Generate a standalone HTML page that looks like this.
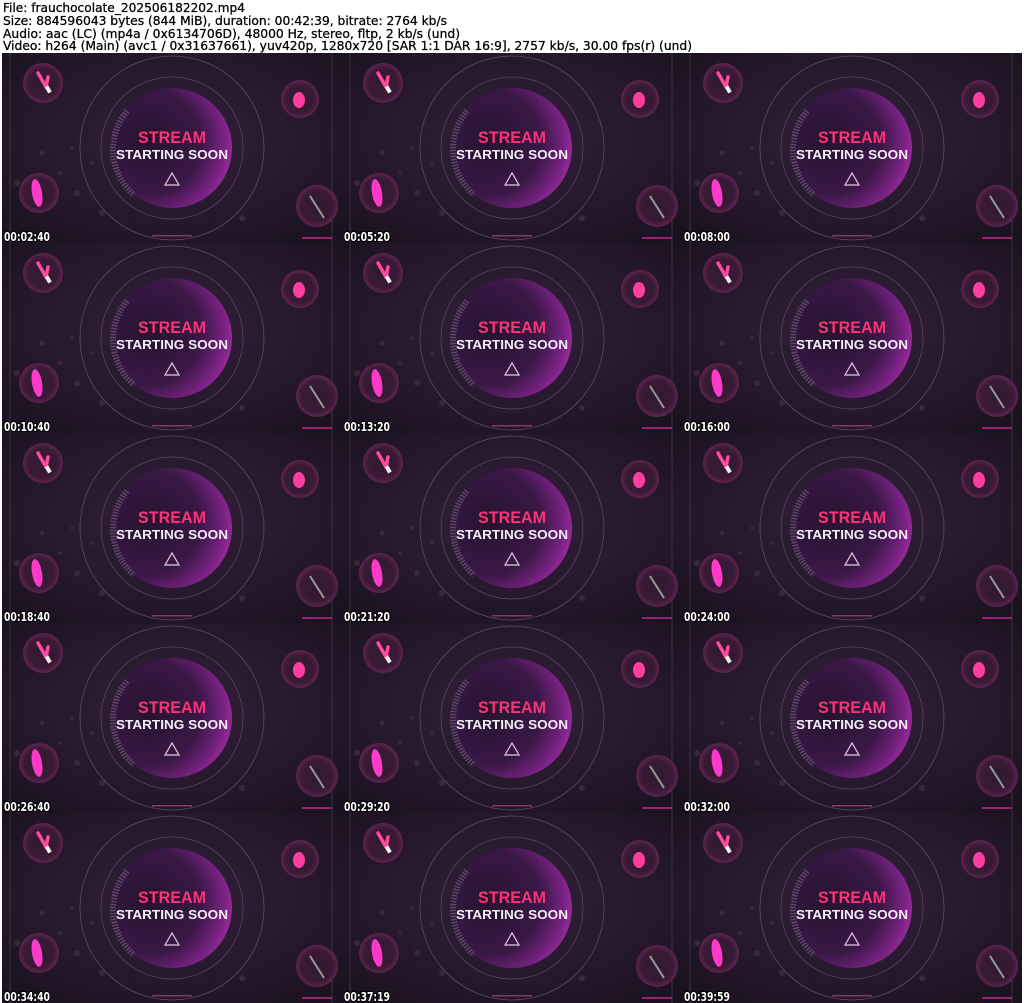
<!DOCTYPE html>
<html><head><meta charset="utf-8"><style>
html,body{margin:0;padding:0;background:#fff;width:1024px;height:1003px;overflow:hidden}
svg{display:block}
.h{font-family:"DejaVu Sans Condensed","DejaVu Sans","Liberation Sans",sans-serif;font-size:12.5px;fill:#000;stroke:#000;stroke-width:0.25}
.s1{font-family:"Liberation Sans","DejaVu Sans",sans-serif;font-weight:bold;font-size:17px;fill:#ff3278}
.s2{font-family:"Liberation Sans","DejaVu Sans",sans-serif;font-weight:bold;font-size:13px;fill:#f4eef6}
.ts{font-family:"DejaVu Sans","Liberation Sans",sans-serif;font-weight:bold;font-size:12px;fill:#fff;stroke:#000;stroke-width:2;paint-order:stroke}
</style></head><body>
<svg width="1024" height="1003" viewBox="0 0 1024 1003" xmlns="http://www.w3.org/2000/svg">
<defs>
<radialGradient id="bg" cx="0.5" cy="0.45" r="0.7"><stop offset="0" stop-color="#33203b"/><stop offset="0.6" stop-color="#26182c"/><stop offset="1" stop-color="#1a1220"/></radialGradient>
<radialGradient id="sp" cx="0.3" cy="0.45" r="0.8"><stop offset="0" stop-color="#26142e"/><stop offset="0.55" stop-color="#3a1846"/><stop offset="0.8" stop-color="#7a2284"/><stop offset="1" stop-color="#c235b8"/></radialGradient>
<radialGradient id="cc" cx="0.5" cy="0.5" r="0.5"><stop offset="0" stop-color="#2e1a30"/><stop offset="0.75" stop-color="#3a1a36"/><stop offset="1" stop-color="#5e2450"/></radialGradient>
<g id="t">
<rect width="340" height="190" fill="url(#bg)"/>
<line x1="8" y1="0" x2="8" y2="190" stroke="#40303f" stroke-width="1"/>
<line x1="330" y1="0" x2="330" y2="190" stroke="#40303f" stroke-width="1"/>
<circle cx="170" cy="95" r="92" fill="none" stroke="#5e4a66" stroke-width="0.8"/>
<circle cx="170" cy="95" r="71" fill="none" stroke="#5e4a66" stroke-width="0.7"/>
<circle cx="170" cy="95" r="60" fill="url(#sp)"/>
<path d="M125 58 A60 60 0 0 0 132 142" fill="none" stroke="#8a7890" stroke-width="6" stroke-dasharray="1.5 1.5" opacity="0.5"/>
<path d="M163 132 L170 120 L177 132 Z" fill="none" stroke="#e8c8e0" stroke-width="1.2"/>
<g fill="#3a2838"><circle cx="40" cy="100" r="2.5"/><circle cx="58" cy="120" r="2"/><circle cx="70" cy="95" r="2"/><circle cx="75" cy="140" r="3"/><circle cx="90" cy="110" r="2"/><circle cx="100" cy="160" r="3"/><circle cx="240" cy="165" r="3"/><circle cx="15" cy="130" r="3"/></g>
<circle cx="41" cy="30" r="20" fill="url(#cc)"/>
<circle cx="298" cy="46" r="19" fill="url(#cc)"/>
<circle cx="37" cy="140" r="20" fill="url(#cc)"/>
<circle cx="315" cy="153" r="21" fill="url(#cc)"/>
<path d="M36 20 L44 34 M44 34 L46 24" stroke="#ff4aa0" stroke-width="3.5" stroke-linecap="round" fill="none"/>
<rect x="44" y="33" width="4" height="7" fill="#eee" transform="rotate(-30 46 36)"/>
<ellipse cx="297" cy="47" rx="6" ry="8" fill="#ff3ea0"/>
<ellipse cx="35" cy="140" rx="5" ry="14" fill="#ff3ac8" transform="rotate(-10 35 140)"/>
<line x1="308" y1="143" x2="322" y2="165" stroke="#999" stroke-width="2"/>
<rect x="150" y="182" width="40" height="1.5" fill="#d0508a" opacity="0.6"/>
<rect x="300" y="184" width="30" height="2" fill="#d02a9a" opacity="0.7"/>
</g>
</defs>
<text class="h" x="3" y="12" textLength="242" lengthAdjust="spacingAndGlyphs">File: frauchocolate_202506182202.mp4</text>
<text class="h" x="3" y="25" textLength="444" lengthAdjust="spacingAndGlyphs">Size: 884596043 bytes (844 MiB), duration: 00:42:39, bitrate: 2764 kb/s</text>
<text class="h" x="3" y="38" textLength="457" lengthAdjust="spacingAndGlyphs">Audio: aac (LC) (mp4a / 0x6134706D), 48000 Hz, stereo, fltp, 2 kb/s (und)</text>
<text class="h" x="3" y="50" textLength="689" lengthAdjust="spacingAndGlyphs">Video: h264 (Main) (avc1 / 0x31637661), yuv420p, 1280x720 [SAR 1:1 DAR 16:9], 2757 kb/s, 30.00 fps(r) (und)</text>

<g transform="translate(2,53)"><use href="#t"/><text class="s1" x="136" y="90" textLength="68" lengthAdjust="spacingAndGlyphs">STREAM</text><text class="s2" x="114" y="106" textLength="112" lengthAdjust="spacingAndGlyphs">STARTING SOON</text><text class="ts" x="2" y="188" textLength="46" lengthAdjust="spacingAndGlyphs">00:02:40</text></g>
<g transform="translate(342,53)"><use href="#t"/><text class="s1" x="136" y="90" textLength="68" lengthAdjust="spacingAndGlyphs">STREAM</text><text class="s2" x="114" y="106" textLength="112" lengthAdjust="spacingAndGlyphs">STARTING SOON</text><text class="ts" x="2" y="188" textLength="46" lengthAdjust="spacingAndGlyphs">00:05:20</text></g>
<g transform="translate(682,53)"><use href="#t"/><text class="s1" x="136" y="90" textLength="68" lengthAdjust="spacingAndGlyphs">STREAM</text><text class="s2" x="114" y="106" textLength="112" lengthAdjust="spacingAndGlyphs">STARTING SOON</text><text class="ts" x="2" y="188" textLength="46" lengthAdjust="spacingAndGlyphs">00:08:00</text></g>

<g transform="translate(2,243)"><use href="#t"/><text class="s1" x="136" y="90" textLength="68" lengthAdjust="spacingAndGlyphs">STREAM</text><text class="s2" x="114" y="106" textLength="112" lengthAdjust="spacingAndGlyphs">STARTING SOON</text><text class="ts" x="2" y="188" textLength="46" lengthAdjust="spacingAndGlyphs">00:10:40</text></g>
<g transform="translate(342,243)"><use href="#t"/><text class="s1" x="136" y="90" textLength="68" lengthAdjust="spacingAndGlyphs">STREAM</text><text class="s2" x="114" y="106" textLength="112" lengthAdjust="spacingAndGlyphs">STARTING SOON</text><text class="ts" x="2" y="188" textLength="46" lengthAdjust="spacingAndGlyphs">00:13:20</text></g>
<g transform="translate(682,243)"><use href="#t"/><text class="s1" x="136" y="90" textLength="68" lengthAdjust="spacingAndGlyphs">STREAM</text><text class="s2" x="114" y="106" textLength="112" lengthAdjust="spacingAndGlyphs">STARTING SOON</text><text class="ts" x="2" y="188" textLength="46" lengthAdjust="spacingAndGlyphs">00:16:00</text></g>

<g transform="translate(2,433)"><use href="#t"/><text class="s1" x="136" y="90" textLength="68" lengthAdjust="spacingAndGlyphs">STREAM</text><text class="s2" x="114" y="106" textLength="112" lengthAdjust="spacingAndGlyphs">STARTING SOON</text><text class="ts" x="2" y="188" textLength="46" lengthAdjust="spacingAndGlyphs">00:18:40</text></g>
<g transform="translate(342,433)"><use href="#t"/><text class="s1" x="136" y="90" textLength="68" lengthAdjust="spacingAndGlyphs">STREAM</text><text class="s2" x="114" y="106" textLength="112" lengthAdjust="spacingAndGlyphs">STARTING SOON</text><text class="ts" x="2" y="188" textLength="46" lengthAdjust="spacingAndGlyphs">00:21:20</text></g>
<g transform="translate(682,433)"><use href="#t"/><text class="s1" x="136" y="90" textLength="68" lengthAdjust="spacingAndGlyphs">STREAM</text><text class="s2" x="114" y="106" textLength="112" lengthAdjust="spacingAndGlyphs">STARTING SOON</text><text class="ts" x="2" y="188" textLength="46" lengthAdjust="spacingAndGlyphs">00:24:00</text></g>

<g transform="translate(2,623)"><use href="#t"/><text class="s1" x="136" y="90" textLength="68" lengthAdjust="spacingAndGlyphs">STREAM</text><text class="s2" x="114" y="106" textLength="112" lengthAdjust="spacingAndGlyphs">STARTING SOON</text><text class="ts" x="2" y="188" textLength="46" lengthAdjust="spacingAndGlyphs">00:26:40</text></g>
<g transform="translate(342,623)"><use href="#t"/><text class="s1" x="136" y="90" textLength="68" lengthAdjust="spacingAndGlyphs">STREAM</text><text class="s2" x="114" y="106" textLength="112" lengthAdjust="spacingAndGlyphs">STARTING SOON</text><text class="ts" x="2" y="188" textLength="46" lengthAdjust="spacingAndGlyphs">00:29:20</text></g>
<g transform="translate(682,623)"><use href="#t"/><text class="s1" x="136" y="90" textLength="68" lengthAdjust="spacingAndGlyphs">STREAM</text><text class="s2" x="114" y="106" textLength="112" lengthAdjust="spacingAndGlyphs">STARTING SOON</text><text class="ts" x="2" y="188" textLength="46" lengthAdjust="spacingAndGlyphs">00:32:00</text></g>

<g transform="translate(2,813)"><use href="#t"/><text class="s1" x="136" y="90" textLength="68" lengthAdjust="spacingAndGlyphs">STREAM</text><text class="s2" x="114" y="106" textLength="112" lengthAdjust="spacingAndGlyphs">STARTING SOON</text><text class="ts" x="2" y="188" textLength="46" lengthAdjust="spacingAndGlyphs">00:34:40</text></g>
<g transform="translate(342,813)"><use href="#t"/><text class="s1" x="136" y="90" textLength="68" lengthAdjust="spacingAndGlyphs">STREAM</text><text class="s2" x="114" y="106" textLength="112" lengthAdjust="spacingAndGlyphs">STARTING SOON</text><text class="ts" x="2" y="188" textLength="46" lengthAdjust="spacingAndGlyphs">00:37:19</text></g>
<g transform="translate(682,813)"><use href="#t"/><text class="s1" x="136" y="90" textLength="68" lengthAdjust="spacingAndGlyphs">STREAM</text><text class="s2" x="114" y="106" textLength="112" lengthAdjust="spacingAndGlyphs">STARTING SOON</text><text class="ts" x="2" y="188" textLength="46" lengthAdjust="spacingAndGlyphs">00:39:59</text></g>
</svg>
</body></html>
